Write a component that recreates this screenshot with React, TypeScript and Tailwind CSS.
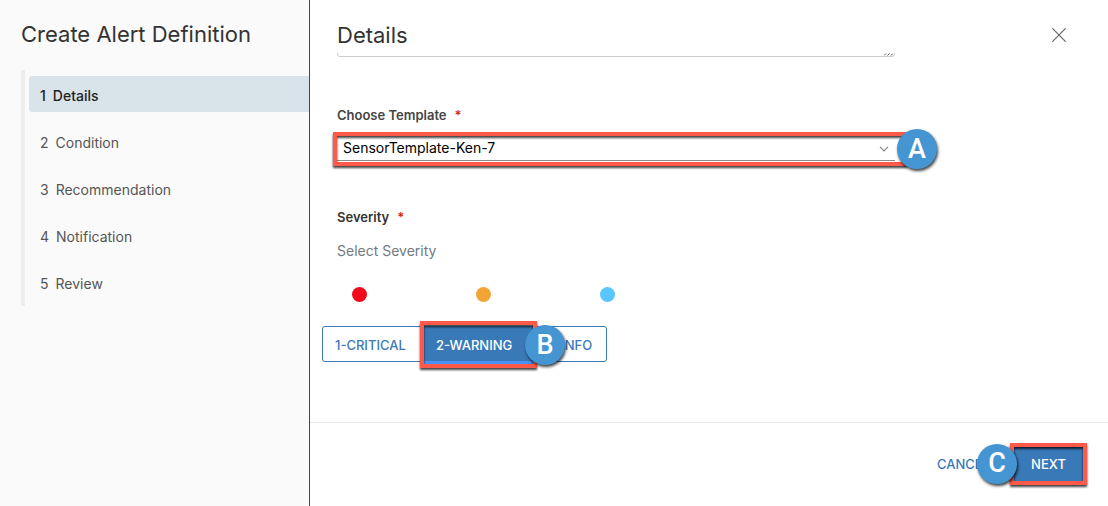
import { useState } from 'react'
import clsx from 'clsx'

const steps = ['Details', 'Condition', 'Recommendation', 'Notification', 'Review']

const severities = [
  { label: '1-CRITICAL', dot: 'bg-[#f00a1c]', width: 'w-[101px]' },
  { label: '2-WARNING', dot: 'bg-[#f3a436]', width: 'w-[111px]' },
  { label: '3-INFO', dot: 'bg-[#5ac6ff]', width: 'w-[71px]' },
]

function Callout({ letter, className }: { letter: string; className: string }) {
  return (
    <span
      className={clsx(
        'absolute z-20 flex size-10 items-center justify-center rounded-full bg-[#4595d3] font-[Roboto,sans-serif] text-[27px] leading-none font-medium text-white shadow-[1px_2px_3px_rgba(0,0,0,0.75)]',
        className,
      )}
    >
      {letter}
    </span>
  )
}

function Highlight({ className }: { className: string }) {
  return (
    <span
      className={clsx(
        'pointer-events-none absolute z-10 border-4 border-[#ff5a49] drop-shadow-[0_2px_1px_rgba(0,0,0,0.75)]',
        className,
      )}
    />
  )
}

function Required() {
  return <span className="ml-2 text-[#d4250b]">*</span>
}

export default function App() {
  const [step, setStep] = useState(0)
  const [severity, setSeverity] = useState(1)

  return (
    <div className="flex min-h-screen bg-white font-[Inter,'Liberation_Sans',sans-serif] text-sm text-[#333]">
      <aside className="w-[310px] shrink-0 border-r border-[#45484a] bg-[#fafafa] pl-[21px]">
        <h1 className="pt-5 text-[22px] leading-7 font-normal">Create Alert Definition</h1>
        <nav className="mt-[22px] flex flex-col gap-[11px] border-l-4 border-[#eee] py-1.5 pl-1">
          {steps.map((name, i) => (
            <button
              key={name}
              onClick={() => setStep(i)}
              className={clsx(
                'flex h-9 items-center gap-[7px] rounded-l-[3px] pt-[3px] pl-[11px] text-left',
                i === step ? 'bg-[#d9e4ea] font-medium text-[#222]' : 'text-[#565656]',
              )}
            >
              <span>{i + 1}</span>
              <span>{name}</span>
            </button>
          ))}
        </nav>
      </aside>

      <main className="flex min-w-0 flex-1 flex-col">
        <header className="flex h-[53px] items-end justify-between pr-[42px] pb-1 pl-[27px]">
          <h2 className="text-[22px] leading-7 font-normal">Details</h2>
          <button aria-label="Close" className="mb-[7px]">
            <svg width="14" height="14" viewBox="0 0 14 14" fill="none" stroke="#666" strokeWidth="1.2" strokeLinecap="round">
              <path d="M.7.7 13.3 13.3M13.3.7.7 13.3" />
            </svg>
          </button>
        </header>

        <div className="flex-1 px-[27px]">
          <div className="relative flex h-1 w-3/4 items-end overflow-hidden">
            <textarea
              aria-label="Description"
              className="h-20 w-full shrink-0 resize-none rounded-[3px] border border-[#ccc]"
            />
            <svg className="absolute right-0.5 bottom-px" width="9" height="3" viewBox="0 0 9 3" stroke="#555" strokeWidth="1">
              <path d="M0 2.5 2 .5M3.5 2.5 5.5 .5M7 2.5 9 .5" />
            </svg>
          </div>

          <label htmlFor="template" className="mt-12 block text-[13px] leading-5 font-semibold text-[#454545]">
            Choose Template
            <Required />
          </label>
          <div className="relative mt-3 w-3/4">
            <select
              id="template"
              className="block h-6 w-full appearance-none border-b border-[#8c8c8c] bg-white pb-0.5 pl-1.5 text-black outline-none"
            >
              <option>SensorTemplate-Ken-7</option>
            </select>
            <svg
              className="pointer-events-none absolute top-[9px] right-1.5"
              width="10"
              height="6"
              viewBox="0 0 10 6"
              fill="none"
              stroke="#888"
              strokeWidth="1.2"
            >
              <path d="m1 .8 4 4 4-4" />
            </svg>
            <Highlight className="-top-[5px] -right-3 -bottom-[5px] -left-1" />
            <Callout letter="A" className="-top-2 -right-[42px]" />
          </div>

          <div id="severity" className="mt-[46px] text-[13px] leading-5 font-semibold text-[#333]">
            Severity
            <Required />
          </div>
          <p className="mt-3.5 leading-5 text-[#737b80]">Select Severity</p>

          <div className="mt-[26px] ml-[15px] flex gap-[109px]">
            {severities.map((s) => (
              <span key={s.label} className={clsx('size-[15px] rounded-full', s.dot)} />
            ))}
          </div>

          <div className="relative mt-6 -ml-[15px] w-fit">
            <div role="group" aria-labelledby="severity" className="flex rounded-[3px] border border-[#3a7ab8]">
              {severities.map((s, i) => (
                <button
                  key={s.label}
                  aria-pressed={i === severity}
                  onClick={() => setSeverity(i)}
                  className={clsx(
                    'h-[34px] pt-0.5 pl-3 text-left text-[13px] font-medium',
                    s.width,
                    i === severity ? 'bg-[#3a79b8] text-white shadow-[0_3px_0_#4a90f5]' : 'text-[#3a79b8]',
                  )}
                >
                  {s.label}
                </button>
              ))}
            </div>
            <Highlight className="-top-[5px] -bottom-[6px] left-[98px] w-[117px]" />
            <Callout letter="B" className="-top-px left-[203px]" />
          </div>
        </div>

        <footer className="mt-10 flex h-[84px] items-center justify-end border-t border-[#e8e8e8] pr-[25px] pb-0.5">
          <button className="mr-6 h-9 pt-0.5 text-[13px] font-medium text-[#3a79b8]">CANCEL</button>
          <div className="relative">
            <button className="block h-[34px] w-[69px] bg-[#3a79b8] pt-0.5 text-[13px] font-medium text-white">NEXT</button>
            <Highlight className="-inset-1" />
            <Callout letter="C" className="-top-[3px] -left-[37px]" />
          </div>
        </footer>
      </main>
    </div>
  )
}
